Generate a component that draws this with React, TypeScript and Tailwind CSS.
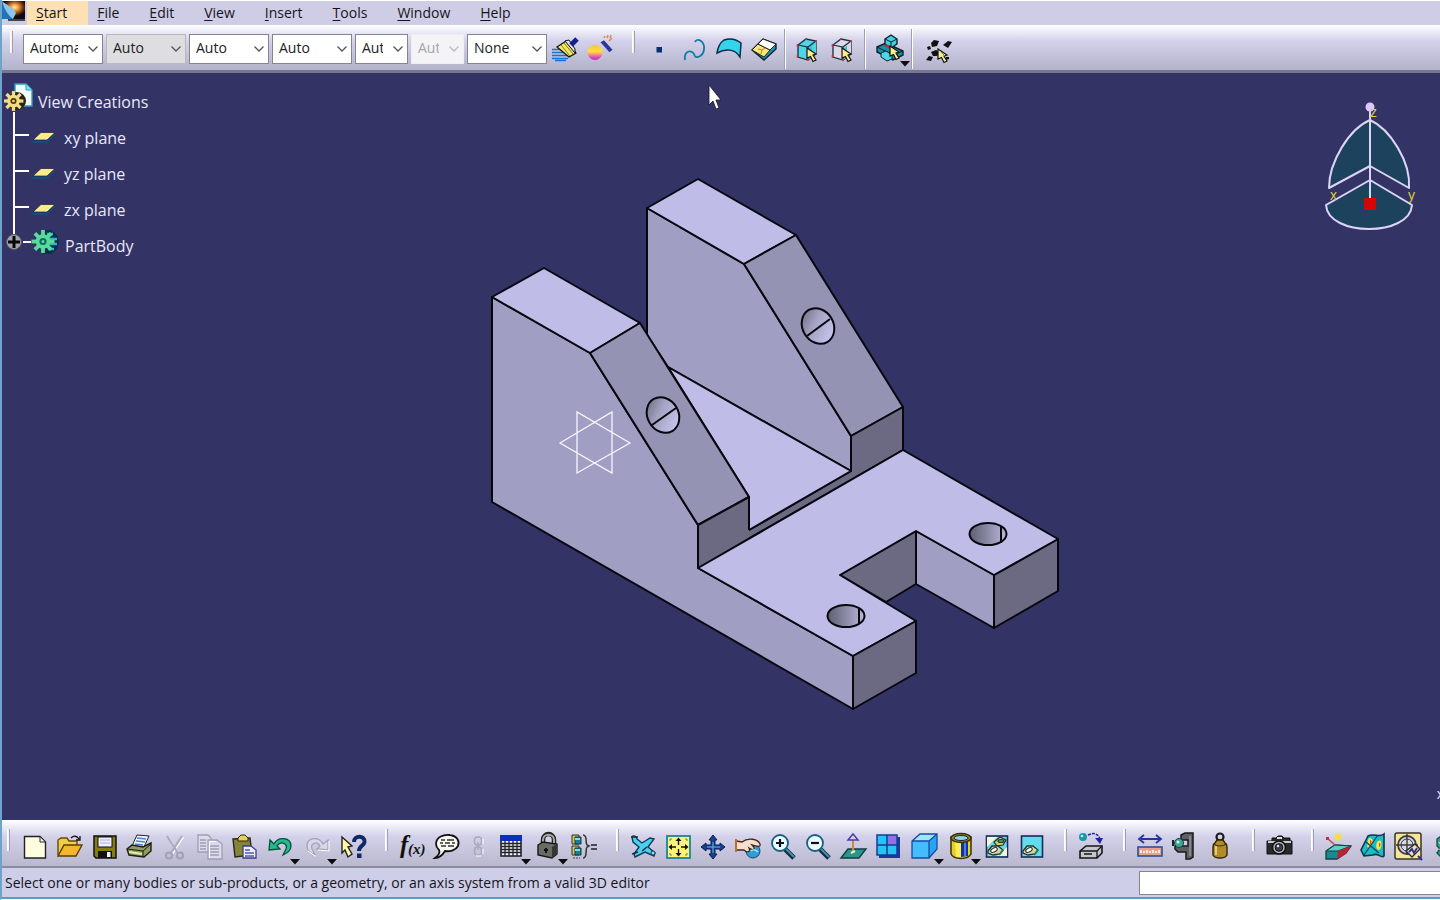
import type { ReactNode } from "react";

type Tool = { label: string; icon: ReactNode; drop?: boolean; narrow?: boolean };

const Arrow = ({ x, y }: { x: number; y: number }) => (
  <path
    transform={`translate(${x} ${y})`}
    d="M0 0L9 6L6 7L9 12L6 13.500L3.500 8.500L0 10Z"
    fill="#ffee88"
    stroke="#111"
    strokeWidth="1.200"
  />
);

const Icon = ({ children }: { children: ReactNode }) => (
  <svg viewBox="0 0 28 28" className="h-7 w-7 shrink-0 overflow-visible" fill="none" aria-hidden="true">
    {children}
  </svg>
);

/* ---------- Graphic properties and selection icons ---------- */

const painter = (
  <Icon>
    <path d="M1 14.500H10M1 17.500H14M1 20.500H17M1 23.500H17M4 25.500H15" stroke="#1473d6" strokeWidth="1.600" />
    <path d="M6 12L15 6L25 18L18 22Z" fill="#f5e95a" stroke="#111" strokeWidth="1.200" />
    <path d="M10 10L19 21M13 8L22 19" stroke="#555" strokeWidth="0.800" />
    <path d="M14 6L18 5L24 14L24 18Z" fill="#dfe6ef" stroke="#111" />
    <path d="M20 10L26 4" stroke="#16208c" strokeWidth="5" />
  </Icon>
);
const wizard = (
  <Icon>
    <defs>
      <linearGradient id="ball" x1="0" y1="0" x2="0" y2="1">
        <stop offset="0" stopColor="#ffc23c" />
        <stop offset="0.45" stopColor="#ffe13c" />
        <stop offset="0.8" stopColor="#e34fb4" />
        <stop offset="1" stopColor="#b02fc8" />
      </linearGradient>
    </defs>
    <circle cx="9" cy="17.500" r="7.500" fill="url(#ball)" />
    <path d="M16 6L25 16" stroke="#2a3594" strokeWidth="4" />
    <path d="M15 6L18 4" stroke="#d9dcf0" strokeWidth="2" />
    <path d="M18 3L19 1M21 3L22 0M24 3L25 0M23 6L26 3" stroke="#e08a5c" strokeWidth="1.600" />
  </Icon>
);
const point = (
  <Icon>
    <rect x="11.500" y="12" width="5.500" height="5.500" fill="#03306e" />
  </Icon>
);
const curve = (
  <Icon>
    <path d="M5 25C4 18 8 15 12 17C16 19 13 23 18 22C25 20 26 10 21 6C18 4 16 5 15 7" stroke="#147aa3" strokeWidth="1.800" />
  </Icon>
);
const surface = (
  <Icon>
    <path d="M2 18C3 11 6 7 9 5C15 3 21 4 26 8L25 22C20 14 11 13 2 18Z" fill="#35d3ec" stroke="#102a44" strokeWidth="1.500" />
  </Icon>
);
const volume = (
  <Icon>
    <path d="M2 15L13 4L26 9V14L14 25Z" fill="#1697ad" stroke="#102030" strokeWidth="1.400" />
    <path d="M2 15L8 9L20 15L14 22Z" fill="#fbe77a" stroke="#222" />
    <path d="M8 9L13 4L26 9L20 15Z" fill="#fff" stroke="#222" />
    <path d="M8 14L12 15L11 19M12 15L15 13" stroke="#b08a20" />
  </Icon>
);
const BoxPick = ({ fill }: { fill: string }) => (
  <Icon>
    <path d="M5 10L13 4L23 6V19L15 25L5 22Z" fill={fill} stroke="#15303d" strokeWidth="1.300" />
    <path d="M15 12L23 6V19L15 25Z" fill={fill} />
    <path d="M15 14L19 11V22L15 25Z" fill="#30b9d0" />
    <path d="M5 10L15 12L23 6M15 12V25" stroke="#15303d" strokeWidth="1.200" />
    <path d="M4.500 9v3M12 4h2M22 6h2M4.500 20v3M15 24v2" stroke="#d62f46" strokeWidth="1.600" />
    <Arrow x={14} y={13} />
  </Icon>
);
const multiSelect = (
  <Icon>
    <path d="M1 12L10 8L27 16V20L17 25L1 17Z" fill="#168fa8" stroke="#09222b" strokeWidth="1.400" />
    <path d="M9 4L15 0L21 4V9L15 13L9 9Z" fill="#3fd0e4" stroke="#09222b" strokeWidth="1.400" />
    <path d="M9 4L15 7L21 4M15 7V12M1 12L17 20L27 16" stroke="#09222b" />
    <path d="M5 18L10 16L16 20V24L11 26L5 22Z" fill="#4ad8e8" stroke="#09222b" />
    <path d="M9 10L15 13" stroke="#d01f30" strokeWidth="2" />
    <Arrow x={14} y={11} />
  </Icon>
);
const cloudSelect = (
  <Icon>
    <path d="M7 8l3-3 5 1-2 5-5 1zM19 10l5-4 4 1-4 6zM3 12l3-1 1 3-3 1zM2 25l3-4 4 1-2 4zM7 17l5-2 4 2-3 4-4 0zM22 22l3 0 0 2-3 1z" fill="#111" />
    <Arrow x={14} y={14} />
    <path d="M17 17L21 21" stroke="#2badb8" />
  </Icon>
);

/* ---------- Standard toolbar icons ---------- */

const newDoc = (
  <Icon>
    <path d="M4.500 3.500H20L25.500 9V25H4.500Z" fill="#fffde0" stroke="#222" strokeWidth="1.400" />
    <path d="M20 3.500V9H25.500Z" fill="#fff" stroke="#222" />
  </Icon>
);
const openDoc = (
  <Icon>
    <path d="M3 22V7L6 5H12L14 8H22V12" fill="#f2cd48" stroke="#6b4a05" strokeWidth="1.400" />
    <path d="M3 23L9 12H27L21 23Z" fill="#f5b52d" stroke="#5a3d04" strokeWidth="1.400" />
    <path d="M16 5C19 2 22 3 24 6M25 3V7H21" stroke="#111" strokeWidth="1.300" />
  </Icon>
);
const save = (
  <Icon>
    <path d="M4 3H26V25H6L4 23Z" fill="#857c13" stroke="#111" strokeWidth="1.500" />
    <rect x="8" y="4" width="14" height="10" fill="#eef1fc" stroke="#111" />
    <path d="M10 7H20M10 10H20" stroke="#a6b3dd" />
    <path d="M8 25V18H22V25Z" fill="#111" />
    <rect x="17" y="19" width="3.500" height="5" fill="#f4f4f4" />
  </Icon>
);
const print = (
  <Icon>
    <path d="M7 13L12 2L24 3L19 14Z" fill="#f3f7ff" stroke="#222" />
    <path d="M12 5L21 6M11 8L20 9M10 11L18 12" stroke="#4a82d6" strokeWidth="1.300" />
    <path d="M2 16L7 12L18 14L26 10V18L19 24L4 22Z" fill="#8f9b60" stroke="#1d2010" strokeWidth="1.400" />
    <path d="M2 16L18 18L26 11M18 18V24" stroke="#1d2010" />
    <path d="M4 19L17 21" stroke="#e5ecab" strokeWidth="2" />
  </Icon>
);
const cut = (
  <Icon>
    <g strokeWidth="2.200">
      <path d="M7 3L18 20M22 3L11 20" stroke="#fff" transform="translate(1 1)" />
      <path d="M7 3L18 20M22 3L11 20" stroke="#aaa9bb" />
      <circle cx="9" cy="22.500" r="3" stroke="#a2a1b5" />
      <circle cx="20" cy="22.500" r="3" stroke="#a2a1b5" />
    </g>
  </Icon>
);
const copy = (
  <Icon>
    <g stroke="#9f9eb3" fill="#dcdbee" strokeWidth="1.300">
      <path d="M3 2H13L16 5V19H3Z" />
      <path d="M13 7H22L27 11V26H13Z" />
      <path d="M5 7H11M5 10H11M5 13H11M5 16H11M15 13H24M15 16H24M15 19H24M15 22H24" />
    </g>
    <path d="M14.500 25V8.500H21" stroke="#fff" />
  </Icon>
);
const paste = (
  <Icon>
    <path d="M3 6L20 5L22 22L5 24Z" fill="#87843a" stroke="#292810" strokeWidth="1.400" />
    <path d="M8 8V5L11 2H15L18 5V8Z" fill="#e8cf55" stroke="#292810" />
    <path d="M13 13H21L26 17V25H13Z" fill="#eef0ff" stroke="#3d3d8c" strokeWidth="1.300" />
    <path d="M15 17H20M15 20H24M15 23H24" stroke="#5654b9" strokeWidth="1.500" />
  </Icon>
);
const undo = (
  <Icon>
    <path d="M8 11C12 3 25 4 25 13C25 18 21 20 17 22L20 16C22 11 15 7 11 13L14 16L3 17L4 7Z" fill="#25b98e" stroke="#07503d" strokeWidth="1.300" />
  </Icon>
);
const redo = (
  <Icon>
    <path d="M20 11C16 3 4 4 4 13C4 18 8 20 12 22L9 16C7 11 14 7 17 13L14 16L25 17V7Z" fill="#d9d8e9" stroke="#a3a2b7" strokeWidth="1.300" />
    <path d="M5 18L12 23H13M15 17L26 18V8" stroke="#fff" />
  </Icon>
);
const whatsThis = (
  <Icon>
    <path d="M3 4L13 13L9 14L13 21L9 24L6 17L3 20Z" fill="#fff9a8" stroke="#222" strokeWidth="1.400" />
    <path d="M15 9C15 2 26 2 25.500 9C25 13 20 13 20 18" stroke="#0d2a66" strokeWidth="4" />
    <rect x="18" y="20.500" width="4.500" height="4.500" fill="#0d2a66" />
  </Icon>
);
const formula = (
  <Icon>
    <text x="2" y="20" className="font-[Liberation_Serif] text-[25px] font-bold italic" fill="#111">f</text>
    <text x="10" y="21" className="font-[Liberation_Serif] text-[15px] font-bold italic" fill="#111">(x)</text>
  </Icon>
);
const comment = (
  <Icon>
    <path d="M3 11C3 4 11 1 17 2C24 3 27 8 25 13C23 17 17 19 12 18C9 23 6 25 2 25C6 22 7 19 6 17C4 15 3 13 3 11Z" fill="#f7f7f2" stroke="#111" strokeWidth="1.800" />
    <path d="M8 7H12M14 7H21M7 10H10M12 10H17M19 10H22M8 13H13M15 13H21" stroke="#333" strokeWidth="1.300" />
  </Icon>
);
const link = (
  <Icon>
    <g stroke="#aaa9bc" strokeWidth="1.500">
      <rect x="10.500" y="4" width="7" height="8" rx="3" />
      <rect x="10.500" y="14" width="7" height="8" rx="3" />
      <path d="M14 9V17" />
    </g>
    <path d="M19 6V11M19 16V21M12 23H17" stroke="#fff" />
  </Icon>
);
const table = (
  <Icon>
    <path d="M4 3H24V23H4Z" fill="#f5f5ff" stroke="#16161c" strokeWidth="1.500" />
    <path d="M4 10.500H24M4 13.500H24M4 16.500H24M4 19.500H24M8 8V23M12 8V23M16 8V23M20 8V23" stroke="#22222b" strokeWidth="1.300" />
    <rect x="3" y="2" width="22" height="6" fill="#0b2fc0" />
  </Icon>
);
const lock = (
  <Icon>
    <path d="M9 13V7C9 -1 20 -1 20 7V11" stroke="#222" strokeWidth="4.500" />
    <path d="M9 13V7C9 0 20 0 20 7V11" stroke="#a7aaa3" strokeWidth="2" />
    <path d="M4 12L9 9L23 11V21L18 25L4 22Z" fill="#686c65" stroke="#161616" strokeWidth="1.400" />
    <path d="M18 14L23 11V21L18 25Z" fill="#35382f" />
    <path d="M12 15V20M10 17H14" stroke="#111" strokeWidth="2" />
  </Icon>
);
const design = (
  <Icon>
    <path d="M2 2H9V11H2ZM2 13H9V22H2Z" fill="#d5c552" stroke="#333" />
    <path d="M5 4H11V11H5ZM5 15H11V22H5Z" fill="#197f93" stroke="#133640" />
    <path d="M5 6H10M5 17H10" stroke="#74e2e5" strokeWidth="2" />
    <path d="M13 2C18 2 15 10 17 12L19 13L17 14C15 16 18 25 13 25" stroke="#333" strokeWidth="1.500" />
    <path d="M21 12H27M21 16H27" stroke="#222" strokeWidth="1.500" />
    <path d="M3 25H10" stroke="#444" strokeDasharray="2 1" />
  </Icon>
);

/* ---------- View toolbar icons ---------- */

const fly = (
  <Icon>
    <path d="M3 4C4 2 8 3 8 6L13 10L21 5L25 6L19 14L26 20L25 23L16 19L6 24L5 21L10 14L4 9Z" fill="#4ad0f0" stroke="#113a55" strokeWidth="1.400" />
    <path d="M2 4H9M3 21L9 19M18 14L13 18" stroke="#1e2b39" strokeWidth="1.500" />
    <circle cx="24" cy="20" r="2" stroke="#113a55" fill="#89e2f4" />
  </Icon>
);
const fitAll = (
  <Icon>
    <rect x="3" y="3" width="23" height="22" fill="#fcf573" stroke="#168998" strokeWidth="1.800" />
    <path d="M14.500 12V7M14.500 16V21M12 14H7M17 14H22" stroke="#111" strokeWidth="1.400" />
    <path d="M14.500 4.500L17.500 8H11.500ZM14.500 23.500L17.500 20H11.500ZM4.500 14L8 11V17ZM24.500 14L21 11V17Z" fill="#111" />
    <path d="M6 8V6H8M21 6H23V8M6 20V22H8M21 22H23V20" stroke="#777" />
  </Icon>
);
const pan = (
  <Icon>
    <path d="M14 2L18 7H16V12H21V10L26 14L21 18V16H16V21H18L14 26L10 21H12V16H7V18L2 14L7 10V12H12V7H10Z" fill="#173f92" stroke="#0a1f50" />
    <path d="M14 9V20M8 14H21" stroke="#63b8e8" strokeWidth="1" />
  </Icon>
);
const rotate = (
  <Icon>
    <circle cx="19" cy="18" r="7" fill="#319dd5" stroke="#12476d" />
    <path d="M2 8L8 9C14 4 24 6 26 11C27 15 22 13 18 12C22 16 20 18 15 15C17 19 13 20 10 17L2 17Z" fill="#f6dfcf" stroke="#402820" strokeWidth="1.300" />
    <path d="M2 6V19" stroke="#c8672c" strokeWidth="2" />
    <path d="M17 18C19 16 22 17 24 19" stroke="#a8e5fa" strokeWidth="1.500" />
  </Icon>
);
const Magnify = ({ plus }: { plus?: boolean }) => (
  <Icon>
    <path d="M16 16L25 25" stroke="#102c40" strokeWidth="5" />
    <path d="M17 16L25 24" stroke="#3b93ad" strokeWidth="2" />
    <circle cx="11" cy="10" r="8" fill="#effbff" stroke="#176184" strokeWidth="1.800" />
    <path d={plus ? "M7 10H15M11 6V14" : "M7 10H15"} stroke="#071426" strokeWidth="2.200" />
  </Icon>
);
const normalView = (
  <Icon>
    <path d="M2 25L9 16H27L20 25Z" fill="#27978f" stroke="#103e40" strokeWidth="1.400" />
    <path d="M14 19V5" stroke="#c78b32" strokeWidth="2" />
    <path d="M14 1L19 7H9Z" fill="#d9d1fa" stroke="#4c3ca6" strokeWidth="1.500" />
    <path d="M12 20L16 18" stroke="#eff7c8" strokeWidth="2" />
  </Icon>
);
const multiView = (
  <Icon>
    <path d="M5 4H26V25H5Z" fill="#22379b" />
    <path d="M3 2H23V22H3Z" fill="#27c3f2" stroke="#173b94" strokeWidth="1.500" />
    <path d="M14 3H22V12H14Z" fill="#9170e3" />
    <path d="M13 2V22M3 12H23" stroke="#173b94" strokeWidth="1.600" />
  </Icon>
);
const isoView = (
  <Icon>
    <path d="M2 8L10 1H27V16L19 25H2Z" fill="#44bdff" />
    <path d="M2 8L10 1H27L19 8Z" fill="#9ce6ff" />
    <path d="M19 8L27 1V16L19 25Z" fill="#2aa4f2" />
    <path d="M2 8H19V25M19 8L27 1M2 8L10 1H27V16L19 25H2Z" stroke="#174b9e" strokeWidth="1.300" />
  </Icon>
);
const shading = (
  <Icon>
    <path d="M4 4V21C7 27 21 27 24 21V4Z" fill="#e6cf26" stroke="#373100" strokeWidth="1.500" />
    <path d="M8 8H14V24H9Z" fill="#f9ee5a" />
    <path d="M14 8H21V23L14 24Z" fill="#1731a3" />
    <path d="M17 8H19V23H17Z" fill="#3d86da" />
    <ellipse cx="14" cy="5" rx="10" ry="4.500" fill="#8d852a" stroke="#373100" strokeWidth="1.400" />
    <ellipse cx="14" cy="5" rx="7" ry="2.500" fill="#8ad7ec" stroke="#222" />
  </Icon>
);
const Visibility = ({ swap }: { swap?: boolean }) => (
  <Icon>
    <rect x="3.500" y="3" width="21" height="21" fill="#62dcec" stroke="#182c57" strokeWidth="1.600" />
    {swap && <path d="M4 4H14L4 14ZM24 14V23H14Z" fill="#f4f3dc" />}
    {swap && (
      <g stroke="#24332e" strokeWidth="1.200">
        <path d="M11 9L17 4L23 7L20 12L14 13Z" fill="#cbd267" />
        <ellipse cx="18" cy="8" rx="3" ry="1.500" fill="#58917d" />
      </g>
    )}
    <path d="M5 18L9 13L15 13L20 17L17 21L10 22L5 20Z" fill="#d3d7a4" stroke="#24332e" strokeWidth="1.300" />
    <ellipse cx="11" cy="17" rx="3.500" ry="2" fill="#fff" stroke="#24332e" transform="rotate(-25 11 17)" />
    <path d="M16 22L20 17" stroke="#24805b" strokeWidth="2" />
  </Icon>
);

/* ---------- Measure, capture and analysis icons ---------- */

const catalog = (
  <Icon>
    <circle cx="6" cy="4" r="4" fill="#1898ad" />
    <circle cx="5" cy="3" r="1.300" fill="#b8f5f5" />
    <path d="M11 2C17 -1 22 1 23 7" stroke="#2a2a9c" strokeWidth="1.500" strokeDasharray="3 1" />
    <path d="M18 5H26L23 11Z" fill="#2222a5" />
    <path d="M3 18L9 13H25V20L20 25H3Z" fill="#c6c7cc" stroke="#161616" strokeWidth="1.600" />
    <path d="M3 18H20V25M20 18L25 13M7 21H15" stroke="#161616" strokeWidth="1.300" />
  </Icon>
);
const measureBetween = (
  <Icon>
    <path d="M5 6H24" stroke="#2434a0" strokeWidth="2" />
    <path d="M8 2L3 6L8 10M20 2L25 6L20 10" stroke="#2434a0" strokeWidth="1.800" />
    <rect x="2" y="14" width="24" height="9" fill="#e9a28a" stroke="#27529b" strokeWidth="1.600" />
    <path d="M5 20V17M8 20V18M11 20V17M14 20V18M17 20V17M20 20V18M23 20V17" stroke="#fff" strokeWidth="1.500" />
  </Icon>
);
const measureItem = (
  <Icon>
    <path d="M10 2L14 0H22V24L19 26H15V19H7L4 16V13H17V7H10Z" fill="#5d6062" stroke="#17191a" strokeWidth="1.500" />
    <path d="M19 3V23" stroke="#999d9d" strokeWidth="1.300" />
    <circle cx="8" cy="10" r="4.500" fill="#41a295" stroke="#14443e" />
    <circle cx="7" cy="9" r="1.500" fill="#c2ffe5" />
    <path d="M2 7V13" stroke="#222" strokeWidth="2" />
  </Icon>
);
const inertia = (
  <Icon>
    <circle cx="14" cy="4" r="3.500" stroke="#1b1b1b" strokeWidth="2.200" />
    <path d="M11 7H17L19 10C21 11 21 12 21 14V22C19 26 9 26 7 22V14C7 12 7 11 9 10Z" fill="#b18b27" stroke="#332500" strokeWidth="1.400" />
    <path d="M10 13V22" stroke="#e7cd72" strokeWidth="2" />
    <path d="M8 11C11 14 18 13 20 11" stroke="#332500" />
  </Icon>
);
const camera = (
  <Icon>
    <path d="M2 8H7V5H11L13 3H17L19 5H25V8H27V21H2Z" fill="#2a2a2d" stroke="#111" />
    <path d="M3 9H26" stroke="#c9c9cd" strokeWidth="2" />
    <path d="M12 5H17" stroke="#ddd" strokeWidth="2" />
    <circle cx="14" cy="14.500" r="6.500" fill="#aeb0b5" stroke="#111" strokeWidth="1.500" />
    <circle cx="14" cy="14.500" r="3.800" fill="#39414e" stroke="#111" />
    <circle cx="13" cy="13" r="1.200" fill="#eef" />
  </Icon>
);
const draft = (
  <Icon>
    <path d="M2 18L11 12L27 13L22 20L13 26H2Z" fill="#188b91" stroke="#143e43" strokeWidth="1.300" />
    <path d="M2 18L11 12L27 13L14 18Z" fill="#57d3c6" stroke="#143e43" />
    <path d="M14 18L27 13L22 21L13 26Z" fill="#b92337" />
    <path d="M3 5L11 12" stroke="#bb4654" strokeWidth="1.500" />
    <path d="M2 4H5V7H2Z" fill="#df2339" />
    <path d="M14 0V9M10 4H18M11 1L17 7M17 1L11 7" stroke="#f3e13a" strokeWidth="1.500" />
  </Icon>
);
const curvature = (
  <Icon>
    <path d="M2 17L9 3C15 0 20 5 25 1V23C22 26 19 19 14 22L5 23Z" fill="#17bfc5" stroke="#16314c" strokeWidth="1.600" />
    <path d="M10 5C15 5 15 11 11 14C7 17 8 9 10 5ZM19 8C24 5 23 16 20 17C17 17 16 11 19 8Z" fill="#f1e84d" />
    <path d="M11 7C14 7 12 12 11 11ZM20 10C22 9 22 14 20 14Z" fill="#e94b2c" />
    <path d="M5 22L19 2M7 9L20 20" stroke="#183f60" strokeWidth="1.300" />
  </Icon>
);
const threadTap = (
  <Icon>
    <rect x="1" y="0" width="26" height="26" rx="2" fill="#f6e69c" stroke="#3a361f" strokeWidth="1.500" />
    <circle cx="13" cy="12" r="9" fill="#dad8e5" stroke="#3d3c3b" strokeWidth="1.800" />
    <circle cx="13" cy="12" r="6" stroke="#35343d" />
    <path d="M13 1V22M2 12H24" stroke="#3d3c3b" strokeWidth="1.400" />
    <path d="M12 18L21 11L26 16L18 24Z" fill="#eee3a1" stroke="#292757" strokeWidth="1.400" />
    <path d="M15 19L18 16L20 20L23 15M24 23L28 27" stroke="#292e93" strokeWidth="1.800" />
  </Icon>
);
const thickness = (
  <Icon>
    <path d="M8 6L12 3H26V23L12 24L8 20L11 16L8 13Z" fill="#24a49b" stroke="#17504e" strokeWidth="1.400" />
    <path d="M9 9H26V17H10L12 13Z" fill="#efc944" />
    <path d="M12 11H26V15H12Z" fill="#e75734" />
  </Icon>
);

/* ---------- Shared controls ---------- */

const ToolButton = ({ label, icon, drop, narrow }: Tool) => (
  <button
    type="button"
    aria-label={label}
    title={label}
    className={`relative flex h-9 shrink-0 items-center justify-center ${drop ? "w-[37px]" : narrow ? "w-7" : "w-[35px]"}`}
  >
    {icon}
    {drop && (
      <svg viewBox="0 0 10 6" className="absolute -right-0.5 bottom-0 h-1.5 w-2.5" aria-hidden="true">
        <path d="M0 0H10L5 5.500Z" fill="#0b0b10" />
      </svg>
    )}
  </button>
);

const Grip = () => (
  <span className="flex h-9 w-6 shrink-0 items-start justify-end pr-1.5">
    <span className="h-[22px] w-[3px] border-r border-l border-r-[#9f9fb0] border-l-white bg-[#f2f2fa]" />
  </span>
);

const Separator = () => <span className="h-10 w-[2px] shrink-0 border-r border-l border-r-white border-l-[#a09fb2]" />;

type Choice = { label: string; value: string; width: string; look?: "shaded" | "disabled" };

const choices: Choice[] = [
  { label: "Fill colour", value: "Automatic", width: "w-20" },
  { label: "Transparency", value: "Auto", width: "w-20", look: "shaded" },
  { label: "Line thickness", value: "Auto", width: "w-20" },
  { label: "Line type", value: "Auto", width: "w-20" },
  { label: "Point symbol", value: "Auto", width: "w-[53px]" },
  { label: "Rendering style", value: "Auto", width: "w-[53px]", look: "disabled" },
  { label: "Layer", value: "None", width: "w-20" },
];

const Dropdown = ({ label, value, width, look }: Choice) => {
  const tone =
    look === "shaded"
      ? "border-[#b9b9bd] bg-[#dedee0] text-[#222]"
      : look === "disabled"
        ? "border-[#eeeef4] bg-[#f4f4f6] text-[#a5a5a8]"
        : "border-[#85858f] bg-white text-[#222]";
  return (
    <span className={`relative flex h-[30px] shrink-0 ${width}`}>
      <select
        aria-label={label}
        disabled={look === "disabled"}
        className={`h-full w-full appearance-none rounded-none border pr-6 pb-0.5 pl-1.5 text-[14px] leading-5 opacity-100 ${tone}`}
      >
        <option>{value}</option>
      </select>
      <svg viewBox="0 0 10 6" className="pointer-events-none absolute top-3 right-[5px] h-1.5 w-2.5" fill="none" aria-hidden="true">
        <path d="M0.500 0.500L5 5L9.500 0.500" stroke={look === "disabled" ? "#bbb" : "#555"} strokeWidth="1.300" />
      </svg>
    </span>
  );
};

const menus = ["Start", "File", "Edit", "View", "Insert", "Tools", "Window", "Help"];

const standardTools: Tool[][] = [
  [
    { label: "New", icon: newDoc },
    { label: "Open", icon: openDoc },
    { label: "Save", icon: save },
    { label: "Quick print", icon: print },
    { label: "Cut", icon: cut },
    { label: "Copy", icon: copy },
    { label: "Paste", icon: paste },
    { label: "Undo", icon: undo, drop: true },
    { label: "Redo", icon: redo, drop: true },
    { label: "What's this?", icon: whatsThis },
  ],
  [
    { label: "Formula", icon: formula },
    { label: "Comment", icon: comment },
    { label: "Link", icon: link, narrow: true },
    { label: "Design table", icon: table, drop: true },
    { label: "Lock", icon: lock, drop: true },
    { label: "Equivalent dimensions", icon: design },
  ],
  [
    { label: "Fly mode", icon: fly },
    { label: "Fit all in", icon: fitAll },
    { label: "Pan", icon: pan },
    { label: "Rotate", icon: rotate },
    { label: "Zoom in", icon: <Magnify plus /> },
    { label: "Zoom out", icon: <Magnify /> },
    { label: "Normal view", icon: normalView },
    { label: "Multi-view", icon: multiView },
    { label: "Isometric view", icon: isoView, drop: true },
    { label: "Shading with edges", icon: shading, drop: true },
    { label: "Hide/Show", icon: <Visibility swap /> },
    { label: "Swap visible space", icon: <Visibility /> },
  ],
  [{ label: "Catalog browser", icon: catalog }],
  [
    { label: "Measure between", icon: measureBetween },
    { label: "Measure item", icon: measureItem },
    { label: "Measure inertia", icon: inertia },
  ],
  [{ label: "Capture", icon: camera }],
  [
    { label: "Draft analysis", icon: draft },
    { label: "Curvature analysis", icon: curvature },
    { label: "Tap and thread analysis", icon: threadTap },
    { label: "Wall thickness analysis", icon: thickness },
  ],
];

/* ---------- Specification tree ---------- */

const teeth = [0, 45, 90, 135, 180, 225, 270, 315];

const Gear = ({ fill, line }: { fill: string; line: string }) => (
  <g>
    {teeth.map((angle) => (
      <rect key={angle} x="-1.800" y="-11" width="3.600" height="6" fill={fill} transform={`rotate(${angle})`} />
    ))}
    <circle r="7" fill={fill} />
    <circle r="3.400" fill={line} />
    <circle r="1.500" fill={fill} />
  </g>
);

const PlaneRow = ({ name }: { name: string }) => (
  <li className="flex h-9 items-center">
    <span className="h-9 w-[14px] shrink-0">
      <span className="mt-3.5 block h-0.5 w-full bg-white" />
    </span>
    <svg viewBox="0 0 28 14" className="mb-0.5 h-3.5 w-7 shrink-0" aria-hidden="true">
      <path d="M1 13L11 4H27L18 13Z" fill="#174b78" />
      <path d="M4 10L12 2.500H26L18 10Z" fill="#fbeb8c" stroke="#1b1b36" strokeWidth="0.700" />
    </svg>
    <span className="pl-[7px]">{name}</span>
  </li>
);

const SpecTree = () => (
  <div className="relative w-fit pt-[11px] pl-0.5 text-[16px] leading-5 text-[#e8e8f8]">
    <div className="flex h-9 items-center">
      <svg viewBox="0 0 32 32" className="mb-2 h-8 w-8 shrink-0" fill="none" aria-hidden="true">
        <path d="M11 2H22L28 8V24H11Z" fill="#f2fcff" stroke="#2b9fc4" strokeWidth="1.400" />
        <path d="M22 2V8H28" fill="#8edcf0" stroke="#2b9fc4" />
        <circle cx="13" cy="19" r="9" fill="#2a2412" />
        <g transform="translate(9.500 19) scale(0.900)">
          <Gear fill="#f4dc83" line="#4b390d" />
        </g>
      </svg>
      <span className="pl-0.5">View Creations</span>
    </div>
    <ul className="-mt-2 -mb-2 ml-[9px] border-l-2 border-white pt-2 pb-2">
      {["xy plane", "yz plane", "zx plane"].map((name) => (
        <PlaneRow key={name} name={name} />
      ))}
    </ul>
    <div className="relative flex h-9 items-center">
      <button type="button" aria-label="Expand PartBody" className="mb-2 h-5 w-[19px]">
        <svg viewBox="0 0 19 20" className="h-5 w-[19px]" aria-hidden="true">
          <circle cx="10" cy="10" r="7.500" fill="#a3a3a8" stroke="#55555e" />
          <path d="M10 4V16M4 10H16" stroke="#08080c" strokeWidth="3" />
        </svg>
      </button>
      <span className="mb-2 h-0.5 w-2 bg-white" />
      <svg viewBox="0 0 30 28" className="mb-2 h-7 w-[30px] shrink-0" fill="none" aria-hidden="true">
        <path d="M11 2H20L26 7L28 14L26 21L20 26H11Z" fill="#0d2f4c" />
        <path d="M16 6H22M18 11H26M18 16H26M17 21H23" stroke="#2fb5c9" strokeWidth="2.500" />
        <g transform="translate(12 13.500) scale(1.050)">
          <Gear fill="#57dd99" line="#116a66" />
        </g>
      </svg>
      <span className="pl-1">PartBody</span>
    </div>
  </div>
);

/* ---------- 3D part ---------- */

const PartScene = () => (
  <svg viewBox="2 73 1438 747" className="absolute inset-0 h-full w-full" role="img" aria-label="Bracket part">
    <defs>
      <linearGradient id="bore" x1="0" y1="0" x2="1" y2="0">
        <stop offset="0" stopColor="#5e5e72" />
        <stop offset="1" stopColor="#b9b8dc" />
      </linearGradient>
      <linearGradient id="slantBore" x1="0" y1="0" x2="0.6" y2="1">
        <stop offset="0" stopColor="#66667a" />
        <stop offset="0.5" stopColor="#a5a4c4" />
        <stop offset="1" stopColor="#c4c3ec" />
      </linearGradient>
    </defs>
    <g stroke="#07070f" strokeWidth="2" strokeLinejoin="round">
      <path d="M647 208L744 264L851 436V471L668 367L647 335Z" fill="#a09ec3" />
      <path d="M647 208L698 179L796 235L744 264Z" fill="#bfbde8" />
      <path d="M744 264L796 235L903 407L851 436Z" fill="#9593b4" />
      <path d="M851 436L903 407V450L698 568L749 530L851 471Z" fill="#6b6a82" />
      <path d="M668 367L851 471L749 530V497Z" fill="#bfbde8" />
      <path d="M492 297L590 353L698 525V568L853 656V709L492 502Z" fill="#a09ec3" />
      <path d="M492 297L544 268L640 323L590 353Z" fill="#bfbde8" />
      <path d="M590 353L640 323L749 497L698 525Z" fill="#9593b4" />
      <path d="M698 525L749 497V538L698 568Z" fill="#6b6a82" stroke="none" />
      <path d="M749 530V497L698 525V568" fill="none" />
      <path d="M840 575L916 531V584L886 602Z" fill="#6b6a82" />
      <path d="M916 531L994 575V628L916 584Z" fill="#a09ec3" />
      <path d="M994 575L1058 539V591L994 628Z" fill="#6b6a82" />
      <path d="M698 568L903 450L1058 539L994 575L916 531L840 575L916 621L853 656Z" fill="#bfbde8" />
      <path d="M853 656L916 621V673L853 709Z" fill="#6b6a82" />
      <ellipse cx="663" cy="415" rx="15.500" ry="18.500" fill="url(#slantBore)" transform="rotate(-30 663 415)" />
      <path d="M652 425L676 408" />
      <ellipse cx="818" cy="326" rx="15.500" ry="18.500" fill="url(#slantBore)" transform="rotate(-30 818 326)" />
      <path d="M807 336L830 319" />
      <ellipse cx="988" cy="534" rx="18.500" ry="11" fill="url(#bore)" />
      <path d="M1001 526V543" />
      <ellipse cx="846" cy="616" rx="18.500" ry="11" fill="url(#bore)" />
      <path d="M859 608V624" />
    </g>
    <path d="M560 443L612 412V473ZM630 443L577 412V473Z" fill="none" stroke="#f7f7ff" strokeWidth="1.300" />
    <path d="M709 85V105L713 101L716 109L719 108L716 100H721Z" fill="#fff" stroke="#15152b" strokeWidth="0.800" />
  </svg>
);

const Compass = () => (
  <svg viewBox="0 0 140 150" className="absolute top-[17px] right-0 h-[150px] w-[140px]" role="img" aria-label="Compass">
    <g fill="#1d425e" stroke="#dcd3f5" strokeWidth="2" strokeLinejoin="round">
      <path d="M70 30C49 39 29 72 29 98L70 76L109 98C111 72 90 39 70 30Z" />
      <path d="M70 90L112 115C110 147 28 147 26 115Z" />
      <path d="M70 17V110" />
    </g>
    <circle cx="70" cy="17" r="4.500" fill="#dcc8f4" />
    <rect x="64" y="108" width="12" height="12" fill="#d30505" />
    <g fill="#d9ce3a" className="font-[Liberation_Sans] text-[14px]">
      <text x="70" y="27">z</text>
      <text x="30" y="110">x</text>
      <text x="108" y="110">y</text>
    </g>
  </svg>
);

export default function App() {
  return (
    <div className="flex h-screen flex-col overflow-hidden border-b border-l-2 border-b-white border-l-[#6ea3cc] bg-[#cfcee8] font-['Open_Sans','Noto_Sans',sans-serif] text-[#14141c]">
      <nav aria-label="Main menu" className="flex h-[25px] shrink-0 items-stretch border-t border-t-white bg-[#cfcde6]">
        <svg viewBox="0 0 25 24" className="h-6 w-[25px]" aria-hidden="true">
          <defs>
            <radialGradient id="flare" cx="0.55" cy="0.35" r="0.5">
              <stop offset="0" stopColor="#fff0bd" />
              <stop offset="0.35" stopColor="#f0973a" />
              <stop offset="0.75" stopColor="#6b3210" />
              <stop offset="1" stopColor="#0b0b12" />
            </radialGradient>
          </defs>
          <rect width="23" height="18" fill="url(#flare)" />
          <path d="M0 0C2 8 6 13 11 18H0Z" fill="#2671bd" />
          <path d="M0 0C3 3 12 7 14 12L11 18C6 14 2 8 0 0Z" fill="#8bc7ed" />
          <path d="M6 19H23" stroke="#15151b" strokeWidth="1.500" />
        </svg>
        {menus.map((name, index) => (
          <button
            key={name}
            type="button"
            className={`flex items-center pr-[21px] pl-[9px] text-[14px] leading-5 ${index === 0 ? "bg-[#fde0b4]" : ""}`}
          >
            <span>
              <u className="underline-offset-2">{name[0]}</u>
              {name.slice(1)}
            </span>
          </button>
        ))}
      </nav>

      <div
        role="toolbar"
        aria-label="Graphic properties"
        className="flex h-12 shrink-0 items-center border-b-[3px] border-b-[#77768f] bg-linear-to-b from-white via-[#d3d2ea] via-35% to-[#b3b2cb] pt-[3px]"
      >
        <span className="-ml-[7px] flex pr-1">
          <Grip />
        </span>
        <div className="flex gap-[3px]">
          {choices.map((choice) => (
            <Dropdown key={choice.label} {...choice} />
          ))}
        </div>
        <ToolButton label="Painter" icon={painter} />
        <ToolButton label="Wizard" icon={wizard} />
        <Grip />
        <ToolButton label="Point filter" icon={point} />
        <ToolButton label="Curve filter" icon={curve} />
        <ToolButton label="Surface filter" icon={surface} />
        <ToolButton label="Volume filter" icon={volume} />
        <span className="w-[3px]" />
        <Separator />
        <span className="w-[3px]" />
        <ToolButton label="Feature element filter" icon={<BoxPick fill="#4ed5e6" />} />
        <ToolButton label="Geometrical element filter" icon={<BoxPick fill="#ded7ea" />} />
        <span className="w-[5px]" />
        <Separator />
        <span className="w-[5px]" />
        <ToolButton label="Intersection edges" icon={multiSelect} drop />
        <span className="w-[3px]" />
        <Separator />
        <span className="w-[7px]" />
        <ToolButton label="Work supports" icon={cloudSelect} />
      </div>

      <main className="relative min-h-0 flex-1 overflow-hidden bg-[#333366]">
        <PartScene />
        <SpecTree />
        <Compass />
        <span className="absolute -right-1 bottom-4 text-[14px] leading-5 text-[#e8e8f8]">x</span>
      </main>

      <div
        role="toolbar"
        aria-label="Standard"
        className="flex h-12 shrink-0 items-center overflow-hidden border-b-2 border-b-[#8b8a9e] bg-linear-to-b from-white via-[#d3d2ea] via-35% to-[#b9b8cf] pt-[7px]"
      >
        {standardTools.map((group, index) => (
          <div key={group[0].label} className={`flex shrink-0 ${index === 0 ? "-ml-2.5" : ""}`}>
            <Grip />
            {group.map((tool) => (
              <ToolButton key={tool.label} {...tool} />
            ))}
          </div>
        ))}
      </div>

      <footer className="flex h-[31px] shrink-0 items-center justify-between border-b-2 border-b-[#5b9bc9] bg-[#cfcee8] pl-[3px]">
        <p className="text-[14px] leading-5 whitespace-nowrap">
          Select one or many bodies or sub-products, or a geometry, or an axis system from a valid 3D editor
        </p>
        <input
          type="text"
          aria-label="Power input"
          className="h-6 w-[21%] rounded-none border border-r-0 border-[#85858f] bg-white px-1 text-[14px]"
        />
      </footer>
    </div>
  );
}
